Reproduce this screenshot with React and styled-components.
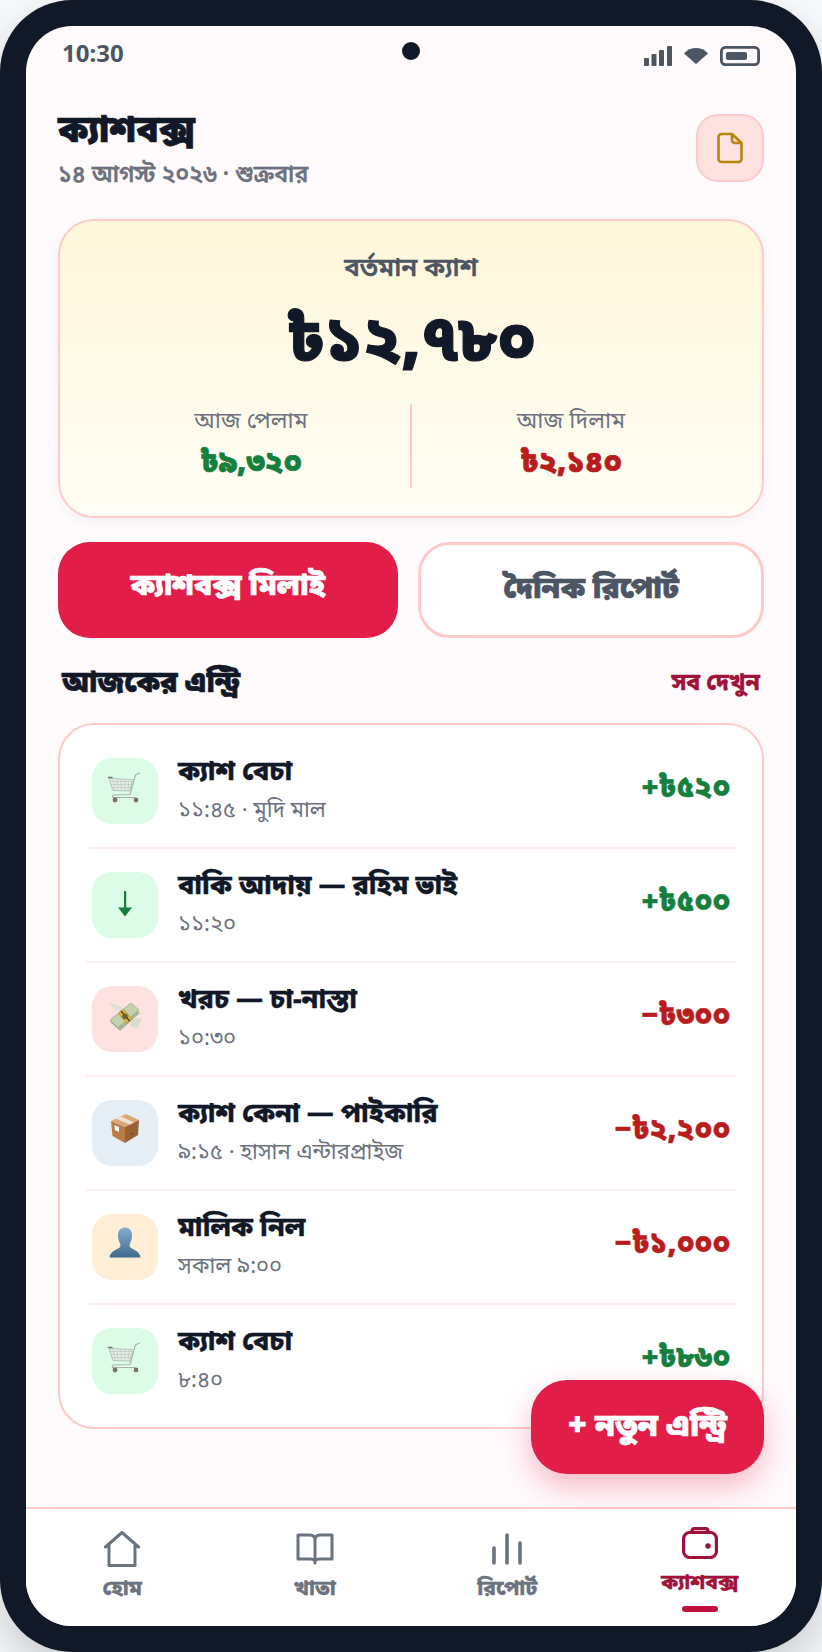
import React from "react";
import styled, { createGlobalStyle } from "styled-components";

const FONT = `"Noto Sans", "Noto Sans Bengali", "Liberation Sans", sans-serif`;

const Global = createGlobalStyle`
  html, body { margin: 0; padding: 0; background: #f9fafb; }
  * { box-sizing: border-box; }
`;

const Phone = styled.div`
  width: 822px;
  height: 1652px;
  background: #111827;
  border-radius: 72px;
  padding: 26px;
  font-family: ${FONT};
  box-shadow: 0 20px 50px rgba(0, 0, 0, 0.2);
`;
const Screen = styled.div`
  position: relative;
  height: 1600px;
  border-radius: 46px;
  overflow: hidden;
  background: #fffafc;
  display: flex;
  flex-direction: column;
`;
const StatusBar = styled.div`
  height: 54px;
  padding: 0 36px 0 36px;
  display: flex;
  align-items: center;
  justify-content: space-between;
  color: #4b5563;
`;
const Time = styled.span`
  font-size: 24px;
  font-weight: 700;
  margin-top: -2px;
`;
const Camera = styled.div`
  position: absolute;
  top: 16px;
  left: 376px;
  width: 18px;
  height: 18px;
  border-radius: 50%;
  background: #111827;
`;
const StatusIcons = styled.div`
  display: flex;
  align-items: center;
  gap: 12px;
  margin-top: 6px;
`;
const Main = styled.main`
  flex: 1;
  padding: 24px 32px 0;
  display: flex;
  flex-direction: column;
`;
const Header = styled.header`
  display: flex;
  align-items: flex-start;
  justify-content: space-between;
`;
const Title = styled.h1`
  margin: 0;
  font-size: 37px;
  line-height: 48px;
  font-weight: 900;
  -webkit-text-stroke: 0.7px #111827;
  color: #111827;
`;
const DateLine = styled.div`
  margin-top: 5px;
  font-size: 23px;
  line-height: 32px;
  font-weight: 600;
  -webkit-text-stroke: 0.3px #6b7280;
  color: #6b7280;
`;
const DocButton = styled.div`
  width: 68px;
  height: 68px;
  margin-top: 10px;
  border-radius: 22px;
  background: #fee2e2;
  border: 2px solid #fecaca;
  display: flex;
  align-items: center;
  justify-content: center;
`;
const BalanceCard = styled.section`
  margin-top: 30px;
  height: 299px;
  border-radius: 36px;
  border: 2px solid #fecaca;
  background: linear-gradient(180deg, #fff7da 0%, #fffdf5 100%);
  box-shadow: 0 4px 16px rgba(0, 0, 0, 0.04);
  padding: 27px 32px 0;
  display: flex;
  flex-direction: column;
  align-items: center;
`;
const BalanceLabel = styled.div`
  font-size: 26px;
  line-height: 36px;
  font-weight: 600;
  -webkit-text-stroke: 0.4px #4b5563;
  color: #4b5563;
`;
const BalanceValue = styled.div`
  margin-top: 11px;
  font-size: 62px;
  line-height: 84px;
  font-weight: 900;
  -webkit-text-stroke: 1.2px #111827;
  color: #111827;
`;
const Split = styled.div`
  margin-top: 25px;
  width: 100%;
  display: grid;
  grid-template-columns: 1fr 2px 1fr;
  height: 84px;
`;
const SplitCell = styled.div`
  display: flex;
  flex-direction: column;
  align-items: center;
  gap: 7px;
`;
const SplitDivider = styled.div`
  background: #fecaca;
`;
const SplitLabel = styled.div`
  font-size: 23px;
  line-height: 30px;
  color: #6b7280;
`;
const SplitValue = styled.div`
  font-size: 30px;
  line-height: 40px;
  font-weight: 900;
  -webkit-text-stroke: 0.7px ${(p) => p.$color};
  color: ${(p) => p.$color};
`;
const Actions = styled.div`
  margin-top: 24px;
  display: grid;
  grid-template-columns: 340px 346px;
  gap: 20px;
`;
const ActionButton = styled.button`
  height: 96px;
  border-radius: 32px;
  font-family: ${FONT};
  font-size: 30px;
  font-weight: 900;
  padding: 0 0 ${(p) => (p.$primary ? "10px" : "5px")};
  background: ${(p) => (p.$primary ? "#e11d48" : "#ffffff")};
  color: ${(p) => (p.$primary ? "#ffffff" : "#4b5563")};
  -webkit-text-stroke: 0.7px ${(p) => (p.$primary ? "#ffffff" : "#4b5563")};
  border: ${(p) => (p.$primary ? "none" : "3px solid #fecaca")};
`;
const SectionHead = styled.div`
  margin-top: 24px;
  padding: 0 4px;
  display: flex;
  align-items: center;
  justify-content: space-between;
  height: 40px;
`;
const SectionTitle = styled.h2`
  margin: 0;
  font-size: 29px;
  font-weight: 900;
  -webkit-text-stroke: 0.6px #111827;
  color: #111827;
`;
const SeeAll = styled.span`
  font-size: 23px;
  font-weight: 800;
  -webkit-text-stroke: 0.3px #9f1239;
  color: #9f1239;
`;
const EntryCard = styled.section`
  margin-top: 21px;
  border-radius: 36px;
  border: 2px solid #fecaca;
  background: #ffffff;
  padding: 10px 26px;
`;
const Row = styled.div`
  padding: 0 6px;
  display: flex;
  align-items: center;
  gap: 20px;
  border-bottom: ${(p) => (p.$last ? "none" : "2px solid #ffeeee")};
  height: ${(p) => (p.$last ? "112px" : "114px")};
`;
const IconBox = styled.div`
  width: 66px;
  height: 66px;
  flex: none;
  border-radius: 20px;
  background: ${(p) => p.$bg};
  display: flex;
  align-items: center;
  justify-content: center;
`;
const RowText = styled.div`
  flex: 1;
  min-width: 0;
  padding-bottom: 7px;
`;
const RowTitle = styled.div`
  font-size: 27px;
  line-height: 38px;
  font-weight: 800;
  -webkit-text-stroke: 0.3px #111827;
  color: #111827;
`;
const RowSub = styled.div`
  margin-top: 3px;
  font-size: 22px;
  line-height: 32px;
  color: #6b7280;
`;
const Amount = styled.div`
  font-size: 29px;
  font-weight: 900;
  padding-bottom: 8px;
  -webkit-text-stroke: 0.5px ${(p) => p.$color};
  color: ${(p) => p.$color};
`;
const Fab = styled.button`
  position: absolute;
  left: 505px;
  top: 1354px;
  width: 233px;
  height: 94px;
  border: none;
  border-radius: 36px;
  background: #e11d48;
  color: #fff;
  font-family: ${FONT};
  font-size: 32px;
  font-weight: 900;
  padding: 0 0 4px;
  -webkit-text-stroke: 0.7px #fff;
  box-shadow: 0 12px 30px rgba(225, 29, 72, 0.3);
`;
const Nav = styled.nav`
  height: 119px;
  background: #fff;
  border-top: 2px solid #fecaca;
  display: grid;
  grid-template-columns: repeat(4, 1fr);
`;
const NavItem = styled.div`
  position: relative;
  display: flex;
  flex-direction: column;
  align-items: center;
  padding-top: ${(p) => (p.$active ? "16px" : "22px")};
  color: ${(p) => (p.$active ? "#9f1239" : "#6b7280")};
`;
const NavIcon = styled.div`
  height: 36px;
  display: flex;
  align-items: center;
  justify-content: center;
`;
const NavLabel = styled.div`
  margin-top: 5px;
  font-size: 21px;
  line-height: 30px;
  font-weight: 800;
  -webkit-text-stroke: 0.3px currentColor;
`;
const ActiveBar = styled.div`
  position: absolute;
  bottom: 14px;
  width: 36px;
  height: 6px;
  border-radius: 3px;
  background: #be123c;
`;
const ArrowSvg = styled.svg`
  width: 16px;
  height: 26px;
  margin-bottom: 3px;
  fill: #15803d;
`;

const CartIcon = () => (
  <svg width="40" height="40" viewBox="0 3 40 40" fill="none">
    <path d="M4 10.5 L27.5 11.5 L25 23 L8 22.5 Z" fill="#e6ede6" />
    <g stroke="#b4c2b8" strokeWidth="0.6">
      <path d="M4.5 13.5 H27 M5.3 16.5 H26.4 M6 19.5 H25.8" />
      <path d="M8 10.5 L10 22.5 M12 10.7 L13.2 22.6 M16 10.9 L16.5 22.8 M20 11 L20 22.9 M24 11.3 L23 23" />
    </g>
    <path d="M4 10.5 L27.5 11.5 L25 23 L8 22.5 Z" stroke="#a3b2a8" strokeWidth="0.7" />
    <path d="M3.5 9.5 H7" stroke="#6b7b80" strokeWidth="1.4" strokeLinecap="round" />
    <path d="M34.5 5 L30.5 7 L25 26.5 L8 27" stroke="#a8b2aa" strokeWidth="1.1" strokeLinecap="round" />
    <path d="M8 27 L7 29.5 L30 29.5" stroke="#a8b2aa" strokeWidth="1" />
    <circle cx="10" cy="32" r="2.4" fill="#77726a" />
    <circle cx="31" cy="32" r="2.4" fill="#77726a" />
  </svg>
);

const MoneyIcon = () => (
  <svg width="40" height="40" viewBox="0 4 40 40" fill="none">
    <path d="M12 16 L4 8 L9 9 L17 12 L20 16 Z" fill="#dde0d2" />
    <path d="M27 24 L37 23 L33 33 L25 31 Z" fill="#d9ddcf" />
    <path d="M5 27 L26 10 L35 18 L15 36 Z" fill="#a9b89a" />
    <path d="M5 25 L26 8 L34 15 L13 33 Z" fill="#c3d1ae" />
    <path d="M5 25 L26 8 L34 15 L13 33 Z" stroke="#8a9a7c" strokeWidth="0.6" />
    <path d="M13 18.5 L18.5 14 L27 24 L22 28.5 Z" fill="#4a4f38" />
    <path d="M13 18.5 L15.5 16.5 L24 26.5 L22 28.5 Z" fill="#e2b13c" />
    <path d="M16.5 15.5 L18.5 14 L27 24 L25.2 25.6 Z" fill="#e2b13c" />
    <circle cx="20" cy="21.3" r="2.8" fill="#6a6338" />
  </svg>
);

const BoxIcon = () => (
  <svg width="40" height="40" viewBox="0 8 40 40" fill="none">
    <path d="M6 16 L21 9 L34 15 L20 22 Z" fill="#d8a878" />
    <path d="M6 16 L20 22 L20 38 L7.5 31 Z" fill="#bb7d46" />
    <path d="M20 22 L34 15 L33 30 L20 38 Z" fill="#9a6233" />
    <path d="M11 13.7 L16 11.4 L29 17.4 L25 19.4 Z" fill="#efe4d4" />
    <path d="M9.5 20 L14 22 L14 27 L9.8 25 Z" fill="#f2f4f4" />
    <path d="M25 30 L29 28" stroke="#6d4322" strokeWidth="1" />
  </svg>
);

const BustIcon = () => (
  <svg width="40" height="40" viewBox="0 122 40 40" fill="none">
    <defs>
      <linearGradient id="bustFill" x1="0" y1="0" x2="0" y2="1">
        <stop offset="0" stopColor="#86aecd" />
        <stop offset="1" stopColor="#3f6890" />
      </linearGradient>
    </defs>
    <path d="M20 122.5 C26 122.5 27.5 128 27 132 C26.6 136 24.5 138.5 24.5 141 C24.5 144 35 145 35.5 152.5 L4.5 152.5 C5 145 15.5 144 15.5 141 C15.5 138.5 13.4 136 13 132 C12.5 128 14 122.5 20 122.5 Z" fill="url(#bustFill)" />
  </svg>
);

const DownArrow = () => (
  <ArrowSvg viewBox="0 0 16 26">
    <rect x="7" y="0" width="2.2" height="19" />
    <path d="M1 16.5 H15 L8 25.5 Z" />
  </ArrowSvg>
);

const GREEN = "#15803d";
const RED = "#b91c1c";
const entries = [
  { icon: <CartIcon />, bg: "#dcfce7", t: "ক্যাশ বেচা", s: "১১:৪৫ · মুদি মাল", a: "+৳৫২০", c: GREEN },
  { icon: <DownArrow />, bg: "#dcfce7", t: "বাকি আদায় — রহিম ভাই", s: "১১:২০", a: "+৳৫০০", c: GREEN },
  { icon: <MoneyIcon />, bg: "#fee2e2", t: "খরচ — চা-নাস্তা", s: "১০:৩০", a: "−৳৩০০", c: RED },
  { icon: <BoxIcon />, bg: "#e5edf5", t: "ক্যাশ কেনা — পাইকারি", s: "৯:১৫ · হাসান এন্টারপ্রাইজ", a: "−৳২,২০০", c: RED },
  { icon: <BustIcon />, bg: "#ffedd5", t: "মালিক নিল", s: "সকাল ৯:০০", a: "−৳১,০০০", c: RED },
  { icon: <CartIcon />, bg: "#dcfce7", t: "ক্যাশ বেচা", s: "৮:৪০", a: "+৳৮৬০", c: GREEN },
];

const Stroke = ({ w, h, vb, children, sw = 2 }) => (
  <svg width={w} height={h} viewBox={vb} fill="none" stroke="currentColor" strokeWidth={sw} strokeLinecap="round" strokeLinejoin="round">
    {children}
  </svg>
);

export default function App() {
  return (
    <>
      <Global />
      <Phone>
        <Screen>
          <StatusBar>
            <Time>10:30</Time>
            <StatusIcons>
              <svg width="28" height="20" viewBox="0 0 28 20" fill="currentColor">
                <rect x="0" y="12" width="5" height="8" rx="1" />
                <rect x="7.5" y="8" width="5" height="12" rx="1" />
                <rect x="15" y="4" width="5" height="16" rx="1" />
                <rect x="23" y="0" width="5" height="20" rx="1" />
              </svg>
              <svg width="24" height="16" viewBox="0 0 24 16" fill="currentColor">
                <path d="M0 5.5 C6.5 -1.8 17.5 -1.8 24 5.5 L12 16 Z" />
              </svg>
              <svg width="40" height="20" viewBox="0 0 40 20" fill="none">
                <rect x="1.4" y="1.4" width="37.2" height="17.2" rx="4" stroke="currentColor" strokeWidth="2.8" />
                <rect x="6" y="6" width="21" height="8" rx="2" fill="currentColor" />
              </svg>
            </StatusIcons>
          </StatusBar>
          <Camera />
          <Main>
            <Header>
              <div>
                <Title>ক্যাশবক্স</Title>
                <DateLine>১৪ আগস্ট ২০২৬ · শুক্রবার</DateLine>
              </div>
              <DocButton>
                <svg width="26" height="32" viewBox="0 0 26 32" fill="none" stroke="#b8860b" strokeWidth="2.6" strokeLinejoin="round">
                  <path d="M4.5 2 H15 L24.5 11 V27 A3 3 0 0 1 21.5 30 H4.5 A3 3 0 0 1 1.5 27 V5 A3 3 0 0 1 4.5 2 Z" />
                  <path d="M15 2 V8 A3 3 0 0 0 18 11 H24.5" />
                </svg>
              </DocButton>
            </Header>
            <BalanceCard>
              <BalanceLabel>বর্তমান ক্যাশ</BalanceLabel>
              <BalanceValue>৳১২,৭৮০</BalanceValue>
              <Split>
                <SplitCell>
                  <SplitLabel>আজ পেলাম</SplitLabel>
                  <SplitValue $color={GREEN}>৳৯,৩২০</SplitValue>
                </SplitCell>
                <SplitDivider />
                <SplitCell>
                  <SplitLabel>আজ দিলাম</SplitLabel>
                  <SplitValue $color={RED}>৳২,১৪০</SplitValue>
                </SplitCell>
              </Split>
            </BalanceCard>
            <Actions>
              <ActionButton $primary>ক্যাশবক্স মিলাই</ActionButton>
              <ActionButton>দৈনিক রিপোর্ট</ActionButton>
            </Actions>
            <SectionHead>
              <SectionTitle>আজকের এন্ট্রি</SectionTitle>
              <SeeAll>সব দেখুন</SeeAll>
            </SectionHead>
            <EntryCard>
              {entries.map((e, i) => (
                <Row key={i} $last={i === entries.length - 1}>
                  <IconBox $bg={e.bg}>{e.icon}</IconBox>
                  <RowText>
                    <RowTitle>{e.t}</RowTitle>
                    <RowSub>{e.s}</RowSub>
                  </RowText>
                  <Amount $color={e.c}>{e.a}</Amount>
                </Row>
              ))}
            </EntryCard>
          </Main>
          <Fab>+ নতুন এন্ট্রি</Fab>
          <Nav>
            <NavItem>
              <NavIcon>
                <Stroke w="36" h="36" vb="0 0 36 36" sw="3">
                  <path d="M1.5 16 L18 1.5 L34.5 16 M5 14 V34.5 H31 V14" />
                </Stroke>
              </NavIcon>
              <NavLabel>হোম</NavLabel>
            </NavItem>
            <NavItem>
              <NavIcon>
                <Stroke w="38" h="32" vb="0 0 38 32" sw="3">
                  <path d="M2 2 H14 Q19 2 19 7 Q19 2 24 2 H36 V26 H24 Q20 26 19 28 Q18 26 14 26 H2 Z M19 7 V30" />
                </Stroke>
              </NavIcon>
              <NavLabel>খাতা</NavLabel>
            </NavItem>
            <NavItem>
              <NavIcon>
                <Stroke w="32" h="32" vb="0 0 32 32" sw="3.6">
                  <path d="M3 30 V15 M16 30 V2 M29 30 V10" />
                </Stroke>
              </NavIcon>
              <NavLabel>রিপোর্ট</NavLabel>
            </NavItem>
            <NavItem $active>
              <NavIcon>
                <Stroke w="36" h="32" vb="0 0 36 32" sw="3.2">
                  <rect x="1.6" y="5.5" width="32.8" height="25" rx="6" />
                  <path d="M10 5.5 V4 Q10 1.6 12.5 1.6 H23.5 Q26 1.6 26 4 V5.5" />
                  <circle cx="26" cy="19" r="1.2" fill="currentColor" />
                </Stroke>
              </NavIcon>
              <NavLabel>ক্যাশবক্স</NavLabel>
              <ActiveBar />
            </NavItem>
          </Nav>
        </Screen>
      </Phone>
    </>
  );
}
